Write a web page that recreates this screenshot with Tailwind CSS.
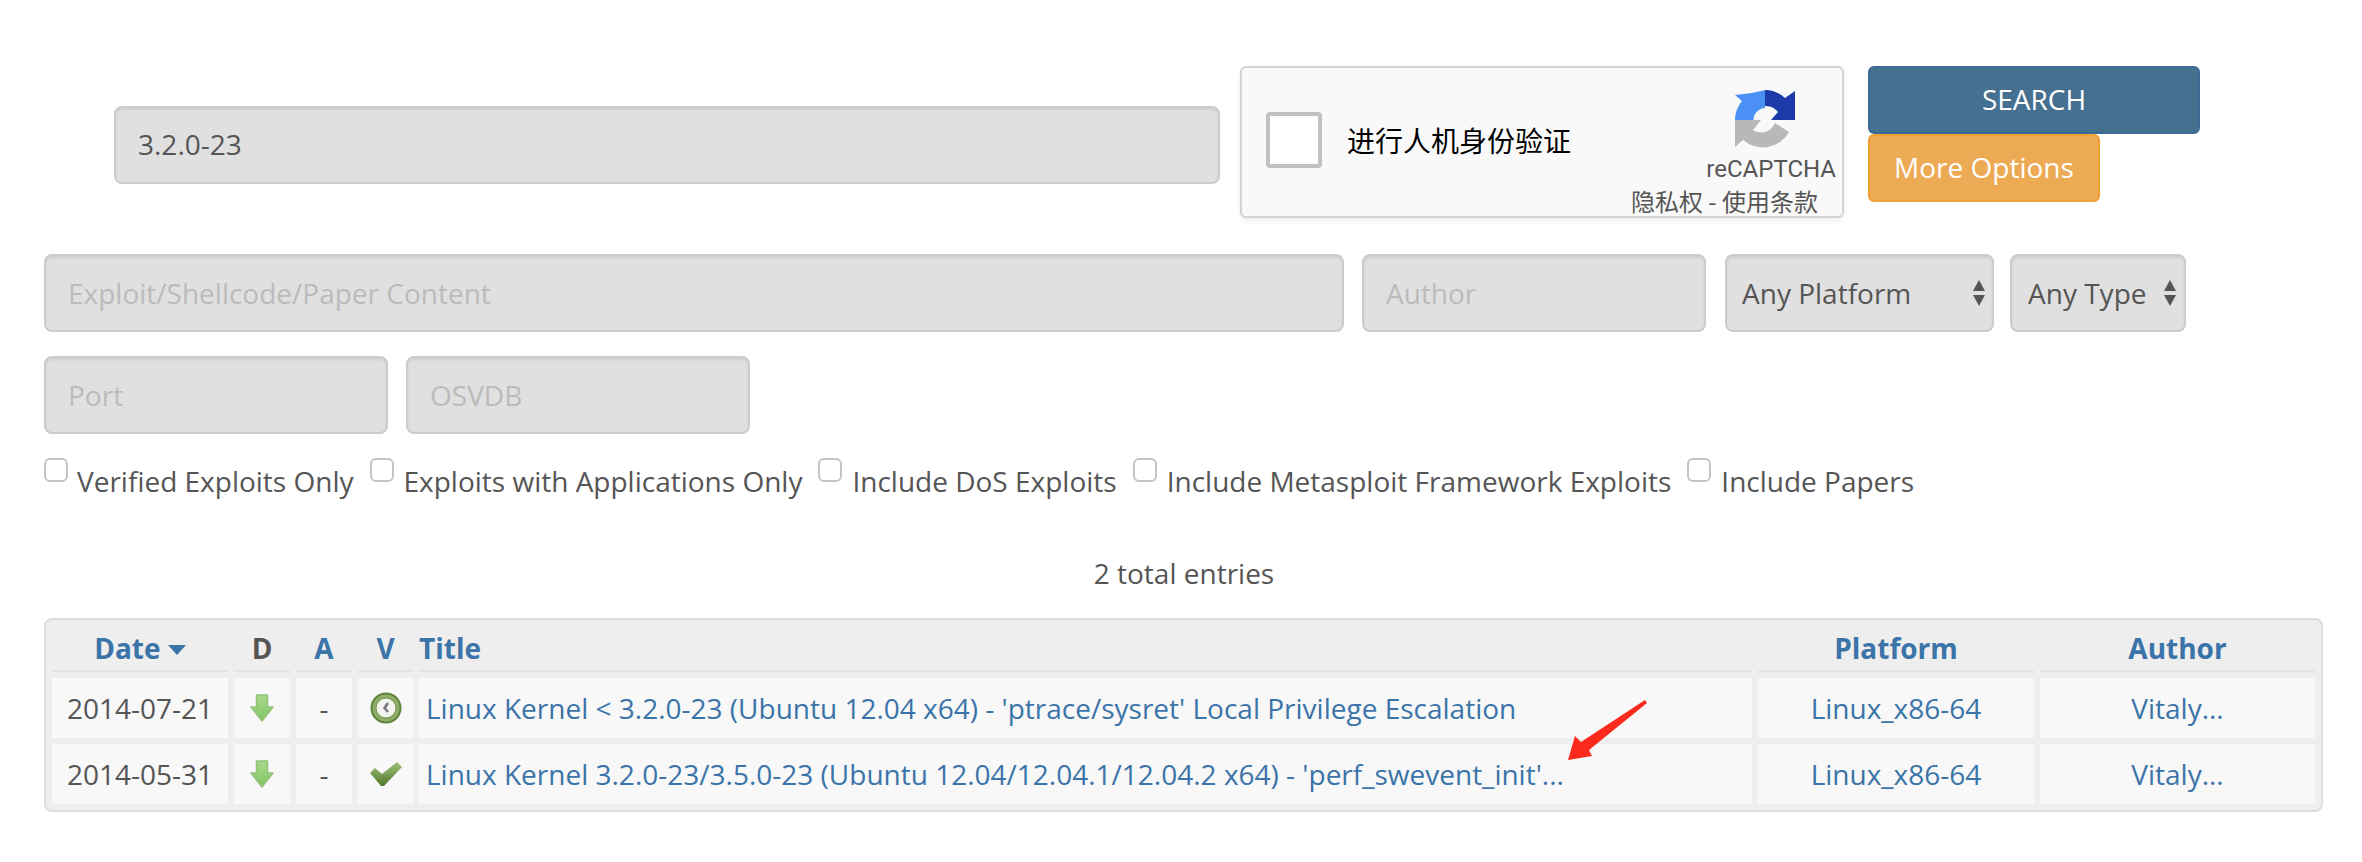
<!DOCTYPE html>
<html lang="en">
<head>
    <meta charset="UTF-8">
    <title>Exploit Database Search</title>
    <script src="https://cdn.jsdelivr.net/npm/@tailwindcss/browser@4"></script>
</head>
<body class="bg-white text-[#555] font-['Open_Sans','Noto_Sans_CJK_SC',sans-serif] text-[28px] leading-[40px] relative h-[862px] overflow-hidden">

<!-- Search form -->
<form class="pt-[66px] pl-[44px]">
    <div class="flex items-start pl-[70px]">
        <input type="text" value="3.2.0-23" class="mt-[40px] w-[1106px] h-[78px] pl-[22px] pb-[3px] bg-[#e0e0e0] text-[#555] border-2 border-[#ccc] rounded-[8px] shadow-[inset_0_2px_2px_rgba(0,0,0,0.08)]">
        <!-- reCAPTCHA box -->
        <div class="relative ml-[20px] w-[604px] h-[152px] bg-[#f9f9f9] border-2 border-[#d3d3d3] rounded-[6px] shadow-[0_2px_6px_rgba(0,0,0,0.08)] shrink-0">
            <div class="flex items-center h-full pl-[24px] pb-[4px] text-black">
                <span class="w-[56px] h-[56px] bg-white border-[4px] border-[#c1c1c1] rounded-[4px]"></span>
                <span class="ml-[25px] font-['Noto_Sans_CJK_SC',sans-serif]">进行人机身份验证</span>
            </div>
            <svg class="absolute left-[493px] top-[22px]" width="60" height="60" viewBox="0 0 60 60">
                <path d="M30 0 L30 18 A12 12 0 0 0 18.5 30 L0 30 A30 30 0 0 1 7 11 L0 5 L17 3 Z" fill="#4a90f5"/>
                <path d="M30 0 A30 30 0 0 1 50 8 L60 1 L60 30 L36 30 L43 22 A15 15 0 0 0 30 16 Z" fill="#1c3aa9"/>
                <path d="M0 30 L0 57 L8 50 A30 30 0 0 0 54 42 L40 33 A15 15 0 0 1 18 40 L26 30 Z" fill="#b8b8b8"/>
            </svg>
            <span class="absolute right-[6px] top-[86px] text-[24px] leading-[30px] font-['Roboto',sans-serif] text-[#555]">reCAPTCHA</span>
            <span class="absolute right-[24px] top-[117px] text-[24px] leading-[32px] font-['Noto_Sans_CJK_SC',sans-serif] text-[#555]">隐私权 - 使用条款</span>
        </div>
        <div class="ml-[24px] flex flex-col items-start">
            <button type="button" class="w-[332px] h-[68px] pb-[3px] bg-[#46708f] border-2 border-[#3b6a94] rounded-[6px] text-white">SEARCH</button>
            <button type="button" class="w-[232px] h-[68px] pb-[3px] bg-[#edaa55] border-2 border-[#eea236] rounded-[6px] text-white">More Options</button>
        </div>
    </div>

    <div class="flex mt-[36px]">
        <input type="text" placeholder="Exploit/Shellcode/Paper Content" class="w-[1300px] h-[78px] px-[22px] bg-[#e0e0e0] border-2 border-[#ccc] rounded-[8px] placeholder:text-[#bbb] shadow-[inset_0_2px_2px_rgba(0,0,0,0.08)]">
        <input type="text" placeholder="Author" class="ml-[18px] w-[344px] h-[78px] px-[22px] bg-[#e0e0e0] border-2 border-[#ccc] rounded-[8px] placeholder:text-[#bbb] shadow-[inset_0_2px_2px_rgba(0,0,0,0.08)]">
        <div class="relative ml-[19px] w-[269px] h-[78px]">
            <select class="appearance-none w-full h-full pl-[15px] bg-[#e0e0e0] border-2 border-[#ccc] rounded-[8px] shadow-[inset_0_2px_2px_rgba(0,0,0,0.08)]"><option>Any Platform</option></select>
            <svg class="absolute right-[8px] top-[26px]" width="14" height="26" viewBox="0 0 14 26"><path d="M7 0 L13 11 L1 11 Z M7 26 L13 15 L1 15 Z" fill="#555"/></svg>
        </div>
        <div class="relative ml-[16px] w-[176px] h-[78px]">
            <select class="appearance-none w-full h-full pl-[16px] bg-[#e0e0e0] border-2 border-[#ccc] rounded-[8px] shadow-[inset_0_2px_2px_rgba(0,0,0,0.08)]"><option>Any Type</option></select>
            <svg class="absolute right-[9px] top-[26px]" width="14" height="26" viewBox="0 0 14 26"><path d="M7 0 L13 11 L1 11 Z M7 26 L13 15 L1 15 Z" fill="#555"/></svg>
        </div>
    </div>

    <div class="flex mt-[24px]">
        <input type="text" placeholder="Port" class="w-[344px] h-[78px] px-[22px] bg-[#e0e0e0] border-2 border-[#ccc] rounded-[8px] placeholder:text-[#bbb] shadow-[inset_0_2px_2px_rgba(0,0,0,0.08)]">
        <input type="text" placeholder="OSVDB" class="ml-[18px] w-[344px] h-[78px] px-[22px] bg-[#e0e0e0] border-2 border-[#ccc] rounded-[8px] placeholder:text-[#bbb] shadow-[inset_0_2px_2px_rgba(0,0,0,0.08)]">
    </div>

    <div class="flex mt-[24px] gap-[16px]">
        <label class="flex items-start"><input type="checkbox" class="appearance-none w-[24px] h-[24px] bg-white border-2 border-[#c4c4c4] rounded-[6px]"><span class="ml-[9px] mt-[3px]">Verified Exploits Only</span></label>
        <label class="flex items-start"><input type="checkbox" class="appearance-none w-[24px] h-[24px] bg-white border-2 border-[#c4c4c4] rounded-[6px]"><span class="ml-[10px] mt-[3px]">Exploits with Applications Only</span></label>
        <label class="flex items-start"><input type="checkbox" class="appearance-none w-[24px] h-[24px] bg-white border-2 border-[#c4c4c4] rounded-[6px]"><span class="ml-[10px] mt-[3px]">Include DoS Exploits</span></label>
        <label class="flex items-start"><input type="checkbox" class="appearance-none w-[24px] h-[24px] bg-white border-2 border-[#c4c4c4] rounded-[6px]"><span class="ml-[10px] mt-[3px]">Include Metasploit Framework Exploits</span></label>
        <label class="flex items-start"><input type="checkbox" class="appearance-none w-[24px] h-[24px] bg-white border-2 border-[#c4c4c4] rounded-[6px]"><span class="ml-[10px] mt-[3px]">Include Papers</span></label>
    </div>
</form>

<!-- Results -->
<p class="mt-[52px] text-center w-[2362px] pl-[6px]">2 total entries</p>

<div class="mt-[25px] mx-[44px] w-[2279px] bg-[#eee] border-2 border-[#ddd] rounded-[8px]">
    <table class="table-fixed w-full border-separate border-spacing-[6px] text-center">
        <colgroup>
            <col class="w-[176px]"><col class="w-[56px]"><col class="w-[56px]"><col class="w-[55px]"><col><col class="w-[276px]"><col class="w-[275px]">
        </colgroup>
        <thead class="font-bold text-[#3b74a8]">
            <tr class="h-[46px]">
                <th class="border-b-2 border-[#e4e4e4]">Date <svg class="inline align-middle mb-[3px]" width="18" height="10" viewBox="0 0 18 10"><path d="M0 0 H18 L9 10 Z" fill="#3b74a8"/></svg></th>
                <th class="border-b-2 border-[#e4e4e4] text-[#555]">D</th>
                <th class="border-b-2 border-[#e4e4e4]">A</th>
                <th class="border-b-2 border-[#e4e4e4]">V</th>
                <th class="border-b-2 border-[#e4e4e4] text-left">Title</th>
                <th class="border-b-2 border-[#e4e4e4]">Platform</th>
                <th class="border-b-2 border-[#e4e4e4]">Author</th>
            </tr>
        </thead>
        <tbody class="text-[#3b74a8]">
            <tr class="h-[60px] bg-[#f8f8f8]">
                <td class="text-[#555]">2014-07-21</td>
                <td>
                    <svg class="mx-auto" width="24" height="28" viewBox="0 0 24 28"><defs><linearGradient id="arrowFill" x1="0" y1="0" x2="0" y2="1"><stop offset="0" stop-color="#a9d98d"/><stop offset="1" stop-color="#82c562"/></linearGradient></defs><path d="M6.5 1 H17.5 V13 H23 L12 27 L1 13 H6.5 Z" fill="url(#arrowFill)" stroke="#93c27b" stroke-width="1.5" stroke-linejoin="round"/></svg>
                </td>
                <td class="text-[#555]">-</td>
                <td>
                    <svg class="mx-auto" width="32" height="32" viewBox="0 0 32 32"><circle cx="16" cy="16" r="15.5" fill="#5f8238"/><circle cx="16" cy="16" r="13.5" fill="#8fae6c"/><circle cx="16" cy="16" r="10" fill="#f4f4ee" stroke="#6f9145" stroke-width="1"/><path d="M18 11 L14.5 16 L18 20" fill="none" stroke="#77777c" stroke-width="2.5"/></svg>
                </td>
                <td class="text-left pl-[7px]">Linux Kernel &lt; 3.2.0-23 (Ubuntu 12.04 x64) - 'ptrace/sysret' Local Privilege Escalation</td>
                <td>Linux_x86-64</td>
                <td>Vitaly...</td>
            </tr>
            <tr class="h-[60px] bg-[#f8f8f8]">
                <td class="text-[#555]">2014-05-31</td>
                <td>
                    <svg class="mx-auto" width="24" height="28" viewBox="0 0 24 28"><path d="M6.5 1 H17.5 V13 H23 L12 27 L1 13 H6.5 Z" fill="url(#arrowFill)" stroke="#93c27b" stroke-width="1.5" stroke-linejoin="round"/></svg>
                </td>
                <td class="text-[#555]">-</td>
                <td>
                    <svg class="mx-auto" width="32" height="26" viewBox="0 0 32 26"><defs><linearGradient id="checkFill" x1="0" y1="0" x2="0" y2="1"><stop offset="0" stop-color="#9cc07a"/><stop offset="1" stop-color="#547a2c"/></linearGradient></defs><path d="M0 12 L5 7 L12 13 L27 1 L32 6 L14 25 L11 25 Z" fill="url(#checkFill)"/></svg>
                </td>
                <td class="text-left pl-[7px]">Linux Kernel 3.2.0-23/3.5.0-23 (Ubuntu 12.04/12.04.1/12.04.2 x64) - 'perf_swevent_init'...</td>
                <td>Linux_x86-64</td>
                <td>Vitaly...</td>
            </tr>
        </tbody>
    </table>
</div>

<!-- red annotation arrow -->
<svg class="absolute left-[1565px] top-[698px]" width="86" height="66" viewBox="0 0 86 66">
    <path d="M3 62 L10 38 L16 44 L80 2 L82 5 L24 52 L27 58 Z" fill="#fb2a1c"/>
</svg>

</body>
</html>
